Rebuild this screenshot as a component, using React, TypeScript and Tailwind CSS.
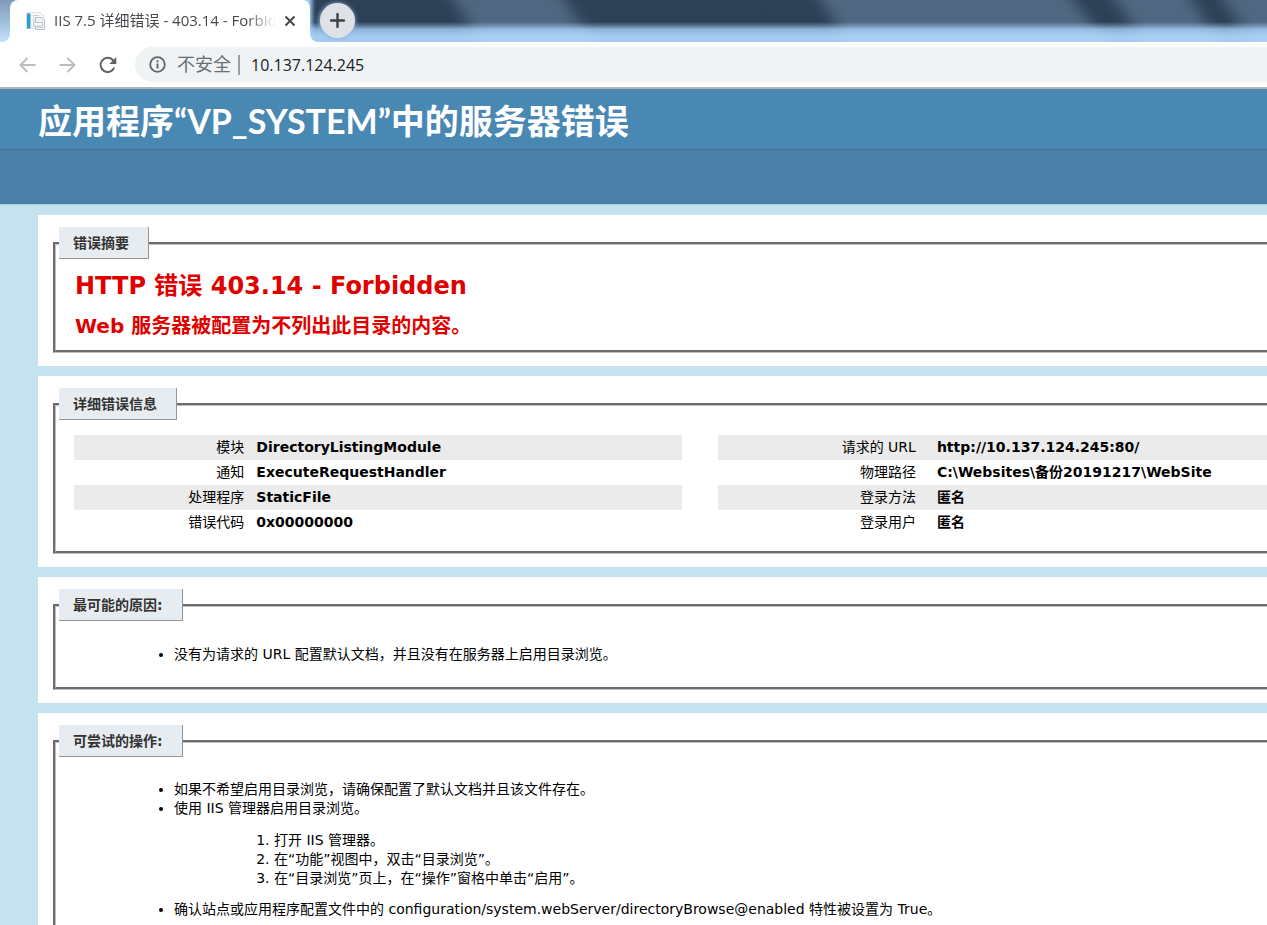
import type { ReactNode } from "react";

interface Detail {
  label: string;
  value: string;
}

const MODULE_DETAILS: Detail[] = [
  { label: "模块", value: "DirectoryListingModule" },
  { label: "通知", value: "ExecuteRequestHandler" },
  { label: "处理程序", value: "StaticFile" },
  { label: "错误代码", value: "0x00000000" },
];

const REQUEST_DETAILS: Detail[] = [
  { label: "请求的 URL", value: "http://10.137.124.245:80/" },
  { label: "物理路径", value: "C:\\Websites\\备份20191217\\WebSite" },
  { label: "登录方法", value: "匿名" },
  { label: "登录用户", value: "匿名" },
];

/** Blurred glass behind the tabs */
function Glass() {
  return (
    <svg
      className="absolute inset-0 h-full w-full"
      viewBox="0 0 1267 42"
      preserveAspectRatio="none"
      aria-hidden="true"
    >
      <defs>
        <linearGradient id="glass" x1="0" y1="0" x2="0" y2="1">
          <stop offset="0" stopColor="#2d4157" />
          <stop offset="0.52" stopColor="#2d4056" />
          <stop offset="0.6" stopColor="#516e8c" />
          <stop offset="0.7" stopColor="#8db3d8" />
          <stop offset="0.85" stopColor="#a3cbf0" />
          <stop offset="1" stopColor="#a6cdf0" />
        </linearGradient>
        <linearGradient id="edge" x1="0" y1="0" x2="0" y2="1">
          <stop offset="0" stopColor="#7f9ab6" />
          <stop offset="0.5" stopColor="#9dbddc" />
          <stop offset="1" stopColor="#c6e2fb" />
        </linearGradient>
        <filter id="soft" x="-10%" y="-50%" width="120%" height="200%">
          <feGaussianBlur stdDeviation="8 1" />
        </filter>
        <filter id="glow" x="-50%" y="-50%" width="200%" height="200%">
          <feGaussianBlur stdDeviation="2" />
        </filter>
      </defs>
      <rect width="1267" height="42" fill="url(#glass)" />
      <g filter="url(#soft)" fill="#b9dcff" fillOpacity="0.25">
        <path d="M452-4H562L596 46H482Z" />
        <path d="M818-4H1070L1110 46H850Z" />
        <path d="M1112-4H1190L1220 46H1146Z" />
        <path d="M1222-4H1290V46H1252Z" />
      </g>
      <rect width="24" height="42" fill="url(#edge)" />
      <path d="M280-10H312V50H280Z" fill="#a8d2fb" filter="url(#glow)" />
      <circle cx="337" cy="21" r="18" fill="#8fb4da" filter="url(#glow)" />
    </svg>
  );
}

function PageIcon() {
  return (
    <svg width="20" height="20" viewBox="0 0 20 20" aria-hidden="true">
      <path d="M0.500 1.500H14L18 5V17.500H0.500Z" fill="#f6f7f9" stroke="#dde1e5" />
      <path d="M1 2.500H4.500V17.500H1Z" fill="#2b9ccf" />
      <path d="M6.500 4.500H13M6.500 7H12M6.500 9.500H9" stroke="#c9cfd6" />
      <path d="M9.500 6.500H15.500L18.500 9V18.500H9.500Z" fill="#eef0f3" stroke="#bfc4cb" />
      <path d="M7.500 11.500H16.500V15H7.500Z" fill="#fafbfc" stroke="#bfc4cb" />
      <path d="M11 16.500H17" stroke="#c9cfd6" />
    </svg>
  );
}

function TabStrip() {
  return (
    <div className="relative flex h-[42px] shrink-0 items-start overflow-hidden pl-[10px]">
      <Glass />
      <div className="relative flex h-[42px] w-[300px] items-center rounded-t-lg bg-white pr-2 pl-4">
        <svg className="absolute bottom-0 -left-2" width="8" height="8" aria-hidden="true">
          <path d="M8 0V8H0A8 8 0 0 0 8 0Z" fill="#fff" />
        </svg>
        <svg className="absolute -right-2 bottom-0" width="8" height="8" aria-hidden="true">
          <path d="M0 0V8H8A8 8 0 0 1 0 0Z" fill="#fff" />
        </svg>
        <PageIcon />
        <span className="ml-2 min-w-0 flex-1 pb-[2px] text-[15px] whitespace-nowrap text-[#45494d] [mask-image:linear-gradient(to_right,#000_86%,transparent_99%)]">
          IIS 7.5 详细错误 - 403.14 - Forbid
        </span>
        <button className="p-1" aria-label="关闭">
          <svg width="16" height="12" viewBox="0 0 16 12" aria-hidden="true">
            <path d="M3.500 1.500L12.500 10.500M12.500 1.500L3.500 10.500" stroke="#45494d" strokeWidth="2" />
          </svg>
        </button>
      </div>
      <button
        className="relative mt-[3px] ml-[10px] flex size-[35px] items-center justify-center rounded-full bg-[#dee1e6]"
        aria-label="新标签页"
      >
        <svg width="15" height="15" viewBox="0 0 15 15" aria-hidden="true">
          <path d="M7.500 1V14M1 7.500H14" stroke="#3c4043" strokeWidth="2.400" strokeLinecap="round" />
        </svg>
      </button>
    </div>
  );
}

function Toolbar() {
  return (
    <div className="flex h-[47px] shrink-0 items-start border-b-2 border-[#b4b4b4] bg-white pt-[5px] pl-[18px]">
      <div className="flex h-[35px] items-center gap-5">
        <button className="text-[#babcbe]" aria-label="后退">
          <svg width="20" height="20" viewBox="0 0 20 20" fill="none" stroke="currentColor" strokeWidth="1.900" aria-hidden="true">
            <path d="M17.500 10H3M9.500 3L2.500 10L9.500 17" />
          </svg>
        </button>
        <button className="text-[#babcbe]" aria-label="前进">
          <svg width="20" height="20" viewBox="0 0 20 20" fill="none" stroke="currentColor" strokeWidth="1.900" aria-hidden="true">
            <path d="M1.500 10H16M9.500 3L16.500 10L9.500 17" />
          </svg>
        </button>
        <button className="text-[#5f6368]" aria-label="重新加载">
          <svg width="20" height="20" viewBox="0 0 20 20" fill="none" aria-hidden="true">
            <path d="M16.300 12.500A7.100 7.100 0 1 1 14.800 5L16.500 6.700" stroke="currentColor" strokeWidth="2" />
            <path d="M18.300 2V9H11.300Z" fill="currentColor" />
          </svg>
        </button>
      </div>
      <div className="ml-[17px] flex h-[35px] flex-1 items-center rounded-l-full bg-[#eff3f4] pl-[14px] text-[18px]">
        <svg width="17" height="17" viewBox="0 0 17 17" fill="none" aria-hidden="true">
          <circle cx="8.500" cy="8.500" r="7.300" stroke="#5f6368" strokeWidth="1.800" />
          <path d="M8.500 7.500V12.500M8.500 4.300V6.200" stroke="#5f6368" strokeWidth="1.900" />
        </svg>
        <span className="ml-[11px] text-[#6a6e72]">不安全</span>
        <span className="mx-[7px] h-5 w-[2px] bg-[#9b9fa3]" />
        <input
          className="min-w-0 flex-1 bg-transparent pl-1 text-[16px] text-[#202124] outline-none"
          aria-label="地址"
          defaultValue="10.137.124.245"
        />
      </div>
    </div>
  );
}

function Panel({ title, children }: { title: string; children: ReactNode }) {
  return (
    <section className="bg-white pt-3 pb-[13px] pl-[15px]">
      <fieldset className="border-3 border-r-0 border-[#c0c0c0] pl-[3px] [border-style:groove]">
        <legend className="border-r border-b border-[#959595] bg-[#e7ecf0] pt-[2px] pr-[19px] pl-[14px] text-[14px] leading-[29px] font-bold text-[#333]">
          {title}
        </legend>
        {children}
      </fieldset>
    </section>
  );
}

function DetailTable({ rows, wide }: { rows: Detail[]; wide?: boolean }) {
  return (
    <table className="w-full table-fixed">
      <tbody>
        {rows.map(({ label, value }) => (
          <tr key={label} className="h-[25px] odd:bg-[#ebebeb]">
            <th
              className={
                wide
                  ? "w-[36%] text-right font-normal"
                  : "w-[28%] text-right font-normal"
              }
              scope="row"
            >
              {label}
            </th>
            <td className={wide ? "pl-[21px] font-bold" : "pl-3 font-bold"}>
              {value}
            </td>
          </tr>
        ))}
      </tbody>
    </table>
  );
}

export default function App() {
  return (
    <div className="flex h-screen flex-col overflow-hidden bg-[#c5e2ef] font-['Open_Sans','Noto_Sans_CJK_SC',sans-serif]">
      <TabStrip />
      <Toolbar />
      <header className="shrink-0 text-white">
        <h1 className="border-b border-[#3f7294] bg-[#4a88b4] pt-1 pl-[38px] font-['Lato','Noto_Sans_CJK_SC',sans-serif] text-[34px] leading-[56px] font-bold whitespace-nowrap">
          应用程序“VP_SYSTEM”中的服务器错误
        </h1>
        <div className="h-[55px] border-b border-[#a9cbdd] bg-[#4a80a7]" />
      </header>
      <main className="flex flex-1 shrink-0 flex-col gap-[10px] pt-[10px] pl-[38px] font-['DejaVu_Sans','Noto_Sans_CJK_SC',sans-serif] text-[14px] leading-[19px] text-black">
        <Panel title="错误摘要">
          <div className="px-4 pt-[11px] pb-[10px] font-bold text-[#e00000]">
            <h2 className="text-[24px] leading-8">HTTP 错误 403.14 - Forbidden</h2>
            <h3 className="mt-[10px] text-[20px] leading-7">Web 服务器被配置为不列出此目录的内容。</h3>
          </div>
        </Panel>
        <Panel title="详细错误信息">
          <div className="flex gap-9 pt-[15px] pb-4 pl-[15px]">
            <div className="w-[51%] shrink-0">
              <DetailTable rows={MODULE_DETAILS} />
            </div>
            <div className="min-w-0 flex-1">
              <DetailTable rows={REQUEST_DETAILS} wide />
            </div>
          </div>
        </Panel>
        <Panel title="最可能的原因:">
          <ul className="list-disc pt-6 pb-[23px] pl-[115px]">
            <li>没有为请求的 URL 配置默认文档，并且没有在服务器上启用目录浏览。</li>
          </ul>
        </Panel>
        <Panel title="可尝试的操作:">
          <ul className="list-disc pt-[23px] pb-6 pl-[115px]">
            <li>如果不希望启用目录浏览，请确保配置了默认文档并且该文件存在。</li>
            <li>
              使用 IIS 管理器启用目录浏览。
              <ol className="mt-[13px] mb-3 list-decimal pl-[100px]">
                <li>打开 IIS 管理器。</li>
                <li>在“功能”视图中，双击“目录浏览”。</li>
                <li>在“目录浏览”页上，在“操作”窗格中单击“启用”。</li>
              </ol>
            </li>
            <li>
              确认站点或应用程序配置文件中的 configuration/system.webServer/directoryBrowse@enabled 特性被设置为 True。
            </li>
          </ul>
        </Panel>
      </main>
    </div>
  );
}
